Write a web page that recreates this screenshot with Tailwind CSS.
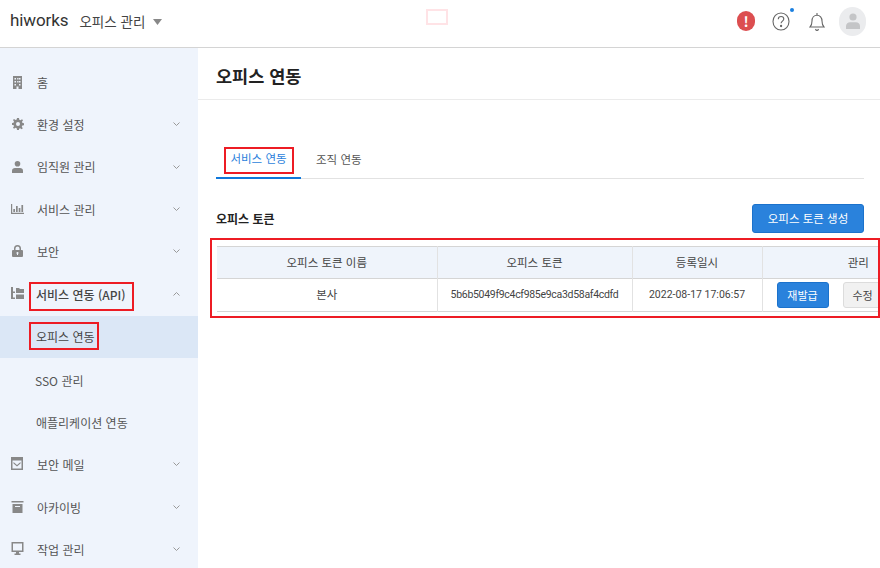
<!DOCTYPE html>
<html lang="ko">
<head>
<meta charset="utf-8">
<title>오피스 연동</title>
<script src="https://cdn.jsdelivr.net/npm/@tailwindcss/browser@4"></script>
</head>
<body class="w-[880px] h-[568px] overflow-hidden bg-white text-[#333] text-[12px] font-['Noto_Sans_CJK_KR','Noto_Sans',sans-serif]">

  <!-- Top bar -->
  <header class="relative h-[48px] flex items-center border-b border-[#d4d4d4] pl-[10px] pr-[14px] pb-[5px]">
    <span class="text-[17px] text-[#333] font-['Roboto',sans-serif] tracking-[-0.1px]">hiworks</span>
    <span class="ml-[11px] text-[13.500px] text-[#444]">오피스 관리</span>
    <svg class="ml-[8px] mt-[1px]" width="9" height="6" viewBox="0 0 9 6"><path d="M0 0h9L4.500 6z" fill="#888"/></svg>
    <div class="absolute left-[426px] top-[9px] w-[22px] h-[16px] border-2 border-[#ffe3e6]"></div>
    <div class="ml-auto flex items-center">
      <div class="w-[18px] h-[20px] rounded-full bg-[#dc4e50] text-white text-[14px] font-bold flex items-center justify-center">!</div>
      <div class="relative ml-[17px]">
        <svg width="18" height="20" viewBox="0 0 18 20" fill="none" stroke="#666" stroke-width="1.100"><ellipse cx="9" cy="10.500" rx="8" ry="8.500"/><path d="M6.300 8.200c0-1.700 1.200-2.700 2.800-2.700s2.700 1 2.700 2.400c0 2.200-2.700 2.200-2.700 4.400"/><circle cx="9.100" cy="15" r=".6" fill="#666"/></svg>
        <span class="absolute right-[-4px] top-[-3px] w-[4px] h-[4px] rounded-full bg-[#1a7fe0]"></span>
      </div>
      <svg class="ml-[19px]" width="16" height="21" viewBox="0 0 16 21" fill="none" stroke="#666" stroke-width="1.100"><path d="M1 16c1.600-1.400 2-3 2-6 0-3.300 2-5.800 5-5.800s5 2.500 5 5.800c0 3 .4 4.600 2 6z"/><path d="M8 2v2M6.500 18c.3 1 .8 1.500 1.500 1.500s1.200-.5 1.500-1.500"/></svg>
      <div class="ml-[14px] w-[27px] h-[29px] rounded-full bg-[#ebecee] flex items-center justify-center">
        <svg width="14" height="16" viewBox="0 0 14 16" fill="#c4c5c7"><circle cx="7" cy="4" r="3.600"/><path d="M0 16v-3c0-2.500 2-3.800 4-3.800h6c2 0 4 1.300 4 3.800v3z"/></svg>
      </div>
    </div>
  </header>

  <div class="flex h-[520px]">
    <!-- Sidebar -->
    <aside class="w-[198px] shrink-0 bg-[#eff4fc] pt-[14px] text-[#555]">
      <div class="h-[42.300px] flex items-center pl-[12px]">
        <svg class="mb-[2px]" width="11" height="13" viewBox="0 0 11 13" fill="#888"><path d="M1 0h9v13H6.500v-2.500h-2V13H1zm1.500 2v1.500H4V2zm2.700 0v1.500h1.300V2zM7 2v1.500h1.500V2zM2.500 5v1.500H4V5zm2.700 0v1.500h1.300V5zM7 5v1.500h1.500V5zM2.500 8v1.500H4V8zM7 8v1.500h1.500V8z" fill-rule="evenodd"/></svg>
        <span class="ml-[14px]">홈</span>
      </div>
      <div class="h-[42.300px] flex items-center pl-[12px] pr-[18px]">
        <svg class="mb-[2px]" width="12" height="12" viewBox="0 0 12 12" fill="#888"><path d="M5 0h2l.3 1.700 1.200.5L10 1.200l1 1-1 1.500.5 1.200 1.500.3v2l-1.700.3-.5 1.200 1 1.500-1.200 1-1.400-1-1.200.5L7 12H5l-.3-1.700-1.200-.5-1.500 1-1-1.200 1-1.400-.5-1.200L0 7V5l1.500-.3.500-1.200-1-1.500 1-1 1.500 1 1.200-.5zm1 4a2 2 0 1 0 0 4 2 2 0 0 0 0-4z" fill-rule="evenodd"/></svg>
        <span class="ml-[13px]">환경 설정</span>
        <svg class="ml-auto mb-[2px]" width="7" height="4" viewBox="0 0 7 4" fill="none" stroke="#999"><path d="M.5.500l3 3 3-3"/></svg>
      </div>
      <div class="h-[42.300px] flex items-center pl-[12px] pr-[18px]">
        <svg class="mb-[2px]" width="11" height="12" viewBox="0 0 11 12" fill="#888"><circle cx="5.500" cy="2.800" r="2.800"/><path d="M0 12V9.500C0 8 1.300 7 3 7h5c1.700 0 3 1 3 2.500V12z"/></svg>
        <span class="ml-[14px] mb-[1px]">임직원 관리</span>
        <svg class="ml-auto mb-[2px]" width="7" height="4" viewBox="0 0 7 4" fill="none" stroke="#999"><path d="M.5.500l3 3 3-3"/></svg>
      </div>
      <div class="h-[42.300px] flex items-center pl-[11px] pr-[18px]">
        <svg class="mb-[3px]" width="13" height="10" viewBox="0 0 13 10" fill="#888"><path d="M0 0h1.200v8.800H13V10H0zM2.300 5h1.700v3H2.300zm2.700-3h1.700v6H5zM7.700 4h1.700v4H7.700zm2.700-3h1.700v7h-1.700z"/></svg>
        <span class="ml-[13px]">서비스 관리</span>
        <svg class="ml-auto mb-[2px]" width="7" height="4" viewBox="0 0 7 4" fill="none" stroke="#999"><path d="M.5.500l3 3 3-3"/></svg>
      </div>
      <div class="h-[42.300px] flex items-center pl-[12px] pr-[18px]">
        <svg class="mb-[2px]" width="11" height="12" viewBox="0 0 11 12" fill="#888"><path d="M2 5V3.500a3.500 3.500 0 0 1 7 0V5h1a1 1 0 0 1 1 1v5a1 1 0 0 1-1 1H1a1 1 0 0 1-1-1V6a1 1 0 0 1 1-1zm1.500 0h4V3.500a2 2 0 0 0-4 0zm2 2a1 1 0 0 0-.5 1.900V10h1V8.900A1 1 0 0 0 5.500 7z" fill-rule="evenodd"/></svg>
        <span class="ml-[14px]">보안</span>
        <svg class="ml-auto mb-[2px]" width="7" height="4" viewBox="0 0 7 4" fill="none" stroke="#999"><path d="M.5.500l3 3 3-3"/></svg>
      </div>
      <div class="relative h-[42.300px] flex items-center pl-[11px] pr-[18px]">
        <svg class="mb-[3px]" width="13" height="13" viewBox="0 0 13 13" fill="#888"><path d="M0 0h2v4.500h2V6H2v4.500h2V12H0zM5 1h3l1 1h4v4H5zm0 6.500h8V12H5z"/></svg>
        <span class="ml-[12px] font-medium text-[#444]">서비스 연동 (API)</span>
        <svg class="ml-auto mb-[2px]" width="7" height="4" viewBox="0 0 7 4" fill="none" stroke="#999"><path d="M.5 3.500l3-3 3 3"/></svg>
        <div class="absolute left-[29px] top-[9px] w-[105px] h-[29px] border-2 border-[#ed1c24]"></div>
      </div>
      <div class="relative h-[42.300px] flex items-center pl-[36px] bg-[#dbe7f6] text-[#444]">
        <span>오피스 연동</span>
        <div class="absolute left-[29px] top-[6px] w-[70px] h-[28px] border-2 border-[#ed1c24]"></div>
      </div>
      <div class="h-[42.300px] mt-[1.500px] flex items-center pl-[35px]">SSO 관리</div>
      <div class="h-[42.300px] flex items-center pl-[36px]">애플리케이션 연동</div>
      <div class="h-[42.300px] flex items-center pl-[11px] pr-[18px]">
        <svg class="mb-[3px]" width="13" height="13" viewBox="0 0 13 13" fill="#888"><path d="M0 0h12v13H0zm1.500 3.500v8h9v-8zm1 1.500l3.500 3 3.500-3v1.500L6 9.500 2.500 6.500z" fill-rule="evenodd"/></svg>
        <span class="ml-[13px]">보안 메일</span>
        <svg class="ml-auto mb-[2px]" width="7" height="4" viewBox="0 0 7 4" fill="none" stroke="#999"><path d="M.5.500l3 3 3-3"/></svg>
      </div>
      <div class="h-[42.300px] flex items-center pl-[11px] pr-[18px]">
        <svg class="mb-[2px]" width="13" height="12" viewBox="0 0 12 12" fill="#888"><path d="M0 0h12v1.500H0zM1 3h10v9H1zm2.500 2v1h5V5z" fill-rule="evenodd"/></svg>
        <span class="ml-[13px]">아카이빙</span>
        <svg class="ml-auto mb-[2px]" width="7" height="4" viewBox="0 0 7 4" fill="none" stroke="#999"><path d="M.5.500l3 3 3-3"/></svg>
      </div>
      <div class="h-[42.300px] flex items-center pl-[11px] pr-[18px]">
        <svg class="mb-[3px]" width="13" height="13" viewBox="0 0 12 13" fill="#888"><path d="M0 0h12v10H7.500v1.500H9V13H3v-1.500h1.500V10H0zm1.500 1.500v7h9v-7z" fill-rule="evenodd"/></svg>
        <span class="ml-[13px]">작업 관리</span>
        <svg class="ml-auto mb-[2px]" width="7" height="4" viewBox="0 0 7 4" fill="none" stroke="#999"><path d="M.5.500l3 3 3-3"/></svg>
      </div>
    </aside>

    <!-- Main -->
    <main class="relative flex-1 min-w-0 overflow-hidden">
      <div class="h-[52px] flex items-center pl-[18px] pt-[6px] border-b border-[#ebebeb]">
        <h1 class="text-[17.500px] font-bold text-[#222]">오피스 연동</h1>
      </div>

      <div class="w-[648px] ml-[18px] mt-[38px] flex h-[41px] border-b border-[#e2e2e2] text-[11.500px]">
        <div class="w-[85px] h-[41px] pt-[3px] border-b-2 border-[#0f78db] flex items-center justify-center text-[#2c7fdc]">서비스 연동</div>
        <div class="ml-[15px] h-[40px] pt-[3px] flex items-center text-[#555]">조직 연동</div>
      </div>

      <div class="w-[648px] ml-[18px] mt-[25px] flex items-center justify-between">
        <h2 class="font-bold text-[#222]">오피스 토큰</h2>
        <button class="w-[112px] h-[29px] rounded-[3px] bg-[#2a82dc] border border-[#1b72cc] text-white text-[11.500px]">오피스 토큰 생성</button>
      </div>

      <table class="ml-[19px] mt-[13px] w-[737px] table-fixed border-collapse text-center text-[#444] text-[11.500px]">
        <thead>
          <tr class="h-[32px] bg-[#eff4fb] border-y border-[#d5d5d5]">
            <th class="w-[220px] font-normal border-r border-[#e2e2e2]">오피스 토큰 이름</th>
            <th class="w-[195px] font-normal border-r border-[#e2e2e2]">오피스 토큰</th>
            <th class="w-[130px] font-normal border-r border-[#e2e2e2]">등록일시</th>
            <th class="w-[192px] font-normal">관리</th>
          </tr>
        </thead>
        <tbody>
          <tr class="h-[33px] border-b border-[#d5d5d5]">
            <td class="border-r border-[#e2e2e2]">본사</td>
            <td class="border-r border-[#e2e2e2] font-['Roboto',sans-serif] text-[10.500px] tracking-[-0.3px]">5b6b5049f9c4cf985e9ca3d58af4cdfd</td>
            <td class="border-r border-[#e2e2e2] font-['Roboto',sans-serif] text-[10.500px]">2022-08-17 17:06:57</td>
            <td>
              <div class="flex items-center pl-[14px] gap-[14px] text-[11px]">
                <button class="w-[52px] h-[26px] rounded-[3px] bg-[#2a82dc] border border-[#1b72cc] text-white">재발급</button>
                <button class="w-[40px] h-[26px] rounded-[3px] bg-[#f1f1f1] border border-[#dcdcdc] text-[#444]">수정</button>
              </div>
            </td>
          </tr>
        </tbody>
      </table>

      <!-- annotation boxes -->
      <div class="absolute left-[26px] top-[99px] w-[70px] h-[27px] border-2 border-[#ed1c24]"></div>
      <div class="absolute left-[12px] top-[190px] w-[670px] h-[80px] border-2 border-[#ed1c24]"></div>
    </main>
  </div>
</body>
</html>
